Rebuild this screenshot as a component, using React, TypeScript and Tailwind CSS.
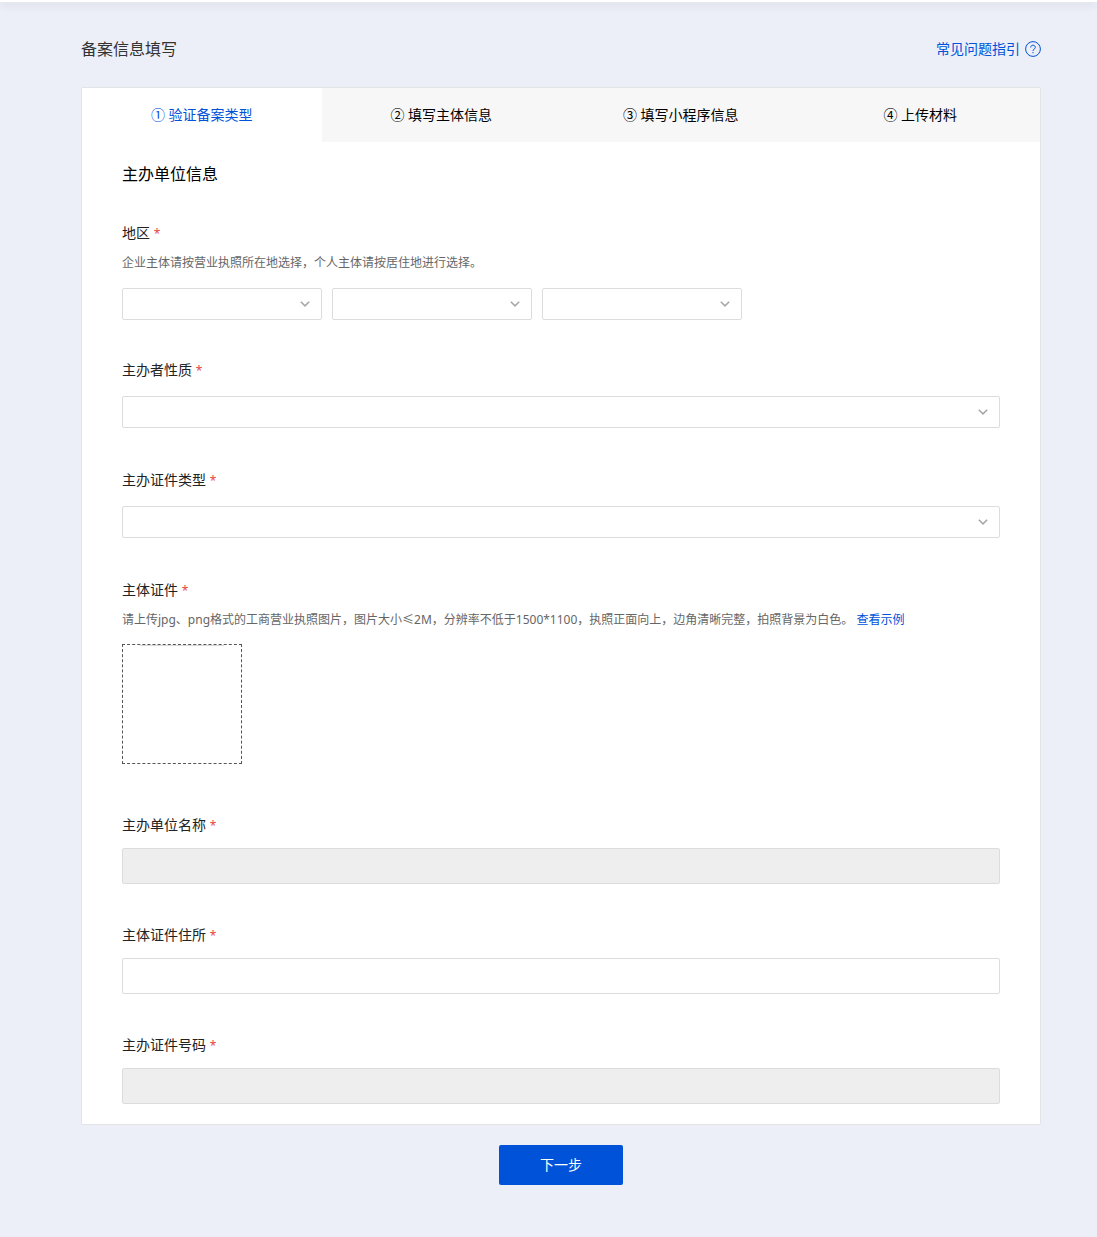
import type { ReactNode } from "react";

const steps = ["① 验证备案类型", "② 填写主体信息", "③ 填写小程序信息", "④ 上传材料"];

type FieldProps = {
  id: string;
  label: string;
  hint?: ReactNode;
  className?: string;
  children: ReactNode;
};

function Field({ id, label, hint, className, children }: FieldProps) {
  return (
    <div className={className}>
      <label htmlFor={id} className="block text-sm leading-5 text-[#222]">
        {label} <span className="text-xs text-[#e54545]">*</span>
      </label>
      {hint && <p className="mt-[10px] text-xs leading-5 text-[#666]">{hint}</p>}
      {children}
    </div>
  );
}

function Select({ id, label }: { id: string; label?: string }) {
  return (
    <div className="relative w-full">
      <select
        id={id}
        aria-label={label}
        defaultValue=""
        className="block h-8 w-full appearance-none rounded-xs border border-[#dcdcdc] bg-white px-2 text-xs outline-none focus:border-[#0052d9]"
      >
        <option value=""></option>
      </select>
      <svg
        viewBox="0 0 10 6"
        className="pointer-events-none absolute top-[13px] right-3 h-[6px] w-[10px]"
        fill="none"
        stroke="#a6a6a6"
        strokeWidth="1.5"
      >
        <path d="M0.8 0.7 5 4.9 9.2 0.7" />
      </svg>
    </div>
  );
}

function TextInput({ id, disabled }: { id: string; disabled?: boolean }) {
  return (
    <input
      id={id}
      type="text"
      disabled={disabled}
      className="mt-[13px] block h-9 w-full rounded-xs border border-[#dcdcdc] bg-white px-2 text-sm outline-none focus:border-[#0052d9] disabled:bg-[#eeeeef]"
    />
  );
}

function App() {
  return (
    <div className="min-h-screen bg-[#eceff8] pb-13 font-['Noto_Sans','Noto_Sans_CJK_SC',sans-serif]">
      <div className="h-[2px] bg-white shadow-[0_2px_10px_rgba(0,0,0,0.2)]" />
      <main className="pr-14 pl-[81px]">
        <header className="flex items-center justify-between pt-[35px] pb-[26px]">
          <h1 className="text-base leading-6 text-[#333]">备案信息填写</h1>
          <a href="#faq" className="flex items-center gap-[5px] text-sm leading-5 text-[#0052d9]">
            常见问题指引
            <svg viewBox="0 0 16 16" className="h-4 w-4" fill="none" stroke="currentColor" strokeWidth="1">
              <circle cx="8" cy="8" r="7.4" />
              <path d="M5.7 6.5C5.7 5 6.7 4.2 8 4.2s2.3.9 2.3 2.1c0 .9-.5 1.3-1.2 1.8-.8.5-1.1.9-1.1 1.8" />
              <path d="M8 11v1.2" />
            </svg>
          </a>
        </header>

        <form>
          <div className="overflow-hidden rounded-xs border border-[#e2e4e8] bg-white">
            <nav className="flex bg-[#f7f7f7]">
              {steps.map((step, i) => (
                <button
                  key={step}
                  type="button"
                  className={`h-[54px] flex-1 text-sm ${i === 0 ? "bg-white text-[#0052d9]" : "text-black"}`}
                >
                  {step}
                </button>
              ))}
            </nav>

            <section className="px-10 pt-5 pb-5">
              <h2 className="text-base leading-6 text-black">主办单位信息</h2>

              <Field
                id="province"
                label="地区"
                hint="企业主体请按营业执照所在地选择，个人主体请按居住地进行选择。"
                className="mt-[37px]"
              >
                <div className="mt-[15px] flex max-w-[620px] gap-[10px]">
                  <Select id="province" />
                  <Select id="city" label="城市" />
                  <Select id="district" label="区县" />
                </div>
              </Field>

              <Field id="nature" label="主办者性质" className="mt-10">
                <div className="mt-4">
                  <Select id="nature" />
                </div>
              </Field>

              <Field id="certType" label="主办证件类型" className="mt-[42px]">
                <div className="mt-4">
                  <Select id="certType" />
                </div>
              </Field>

              <Field
                id="certFile"
                label="主体证件"
                className="mt-[42px]"
                hint={
                  <>
                    请上传jpg、png格式的工商营业执照图片，图片大小≤2M，分辨率不低于1500*1100，执照正面向上，边角清晰完整，拍照背景为白色。{" "}
                    <a href="#sample" className="text-[#0052d9]">
                      查看示例
                    </a>
                  </>
                }
              >
                <label
                  htmlFor="certFile"
                  className="mt-[14px] block h-30 w-30 cursor-pointer border border-dashed border-[#555] px-[17px]"
                >
                  <span className="block h-px bg-[#d8d8d8]" />
                  <input id="certFile" type="file" accept=".jpg,.png" className="sr-only" />
                </label>
              </Field>

              <Field id="orgName" label="主办单位名称" className="mt-[51px]">
                <TextInput id="orgName" disabled />
              </Field>

              <Field id="certAddress" label="主体证件住所" className="mt-[41px]">
                <TextInput id="certAddress" />
              </Field>

              <Field id="certNumber" label="主办证件号码" className="mt-[41px]">
                <TextInput id="certNumber" disabled />
              </Field>
            </section>
          </div>

          <button
            type="button"
            className="mx-auto mt-5 block h-10 w-[124px] rounded-xs bg-[#0052d9] text-sm text-white"
          >
            下一步
          </button>
        </form>
      </main>
    </div>
  );
}

export default App;
